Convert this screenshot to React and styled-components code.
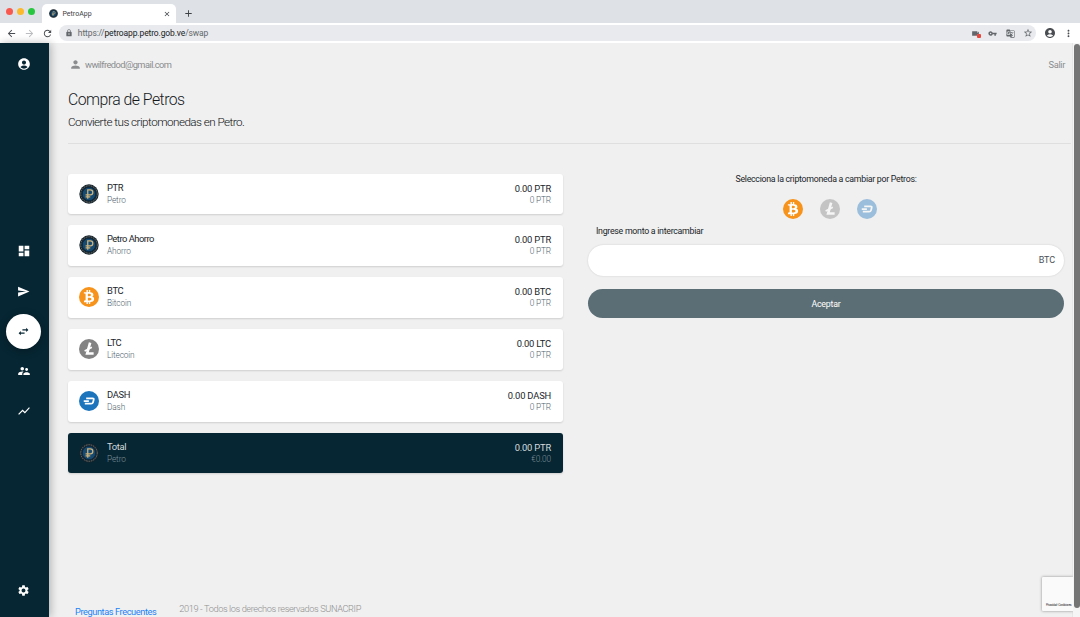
import styled, { createGlobalStyle } from "styled-components";
import {
  MdAccountCircle,
  MdArrowBack,
  MdArrowForward,
  MdClose,
  MdDashboard,
  MdGTranslate,
  MdLock,
  MdMoreVert,
  MdPerson,
  MdRefresh,
  MdSend,
  MdSettings,
  MdShowChart,
  MdStarBorder,
  MdSupervisorAccount,
  MdSwapHoriz,
  MdVideocam,
  MdVpnKey,
  MdAdd,
} from "react-icons/md";
import { FaBtc } from "react-icons/fa";

const GlobalStyle = createGlobalStyle`
  * {
    box-sizing: border-box;
  }
  body {
    margin: 0;
    background: #f0f0f0;
    font-family: Roboto, "Liberation Sans", sans-serif;
    overflow: hidden;
  }
  svg {
    display: block;
    flex-shrink: 0;
  }
`;

const Window = styled.div`
  width: 1080px;
  height: 617px;
  display: flex;
  flex-direction: column;
  overflow: hidden;
`;

const TabStrip = styled.div`
  height: 23px;
  flex-shrink: 0;
  display: flex;
  align-items: flex-end;
  background: #dee1e6;
`;
const Lights = styled.div`
  display: flex;
  gap: 4px;
  padding: 0 7px 8px 6px;
`;
const Light = styled.span`
  width: 7px;
  height: 7px;
  border-radius: 50%;
  background: ${(p) => p.$color};
`;
const Tab = styled.div`
  width: 134px;
  height: 19px;
  display: flex;
  align-items: center;
  padding: 0 5px 0 7px;
  border-radius: 5px 5px 0 0;
  background: #fff;
  color: #3c4043;
  font-size: 7px;
`;
const TabTitle = styled.span`
  flex: 1;
  padding-left: 4.5px;
`;
const NewTab = styled.div`
  padding: 0 0 4px 7px;
  color: #3c4043;
`;

const Toolbar = styled.div`
  height: 20px;
  flex-shrink: 0;
  display: flex;
  align-items: center;
  padding: 0 6px;
  background: #fff;
  color: #4a4d51;
`;
const NavButtons = styled.div`
  display: flex;
  gap: 7px;
  width: 53px;
`;
const Address = styled.div`
  width: 980px;
  height: 16px;
  display: flex;
  align-items: center;
  padding: 0 3px 0 6px;
  border-radius: 8px;
  background: #e8eaed;
  color: #63676b;
  font-size: 8.5px;
  letter-spacing: -0.12px;
`;
const Url = styled.span`
  flex: 1;
  padding-left: 5px;
  b {
    font-weight: 400;
    color: #202124;
  }
`;
const AddressIcons = styled.div`
  display: flex;
  align-items: center;
  gap: 8.5px;
`;
const Camera = styled.span`
  position: relative;
`;
const Blocked = styled.span`
  position: absolute;
  right: -1px;
  bottom: 0;
  width: 4px;
  height: 4px;
  border-radius: 1px;
  background: #e8453c;
`;
const BrowserMenu = styled.div`
  display: flex;
  align-items: center;
  gap: 7px;
  padding-left: 8px;
`;

const Body = styled.div`
  flex: 1;
  min-height: 0;
  display: flex;
`;

const Sidebar = styled.nav`
  width: 49px;
  flex-shrink: 0;
  display: flex;
  flex-direction: column;
  justify-content: space-between;
  align-items: center;
  padding: 14px 2px 20px 0;
  background: #062633;
  color: #fff;
  box-shadow: 2px 0 8px rgba(0, 0, 0, 0.25);
`;
const SideMenu = styled.div`
  display: flex;
  flex-direction: column;
  align-items: center;
  gap: 5px;
  margin-top: 7px;
`;
const SideItem = styled.div`
  width: 35px;
  height: 35px;
  display: flex;
  align-items: center;
  justify-content: center;
  border-radius: 50%;
  background: ${(p) => (p.$active ? "#fff" : "transparent")};
  color: ${(p) => (p.$active ? "#062633" : "#fff")};
  box-shadow: ${(p) => (p.$active ? "0 2px 8px rgba(0, 0, 0, 0.3)" : "none")};
`;

const Main = styled.main`
  flex: 1;
  min-width: 0;
  display: flex;
  flex-direction: column;
  padding-left: 19px;
  color: #212529;
`;
const UserBar = styled.div`
  height: 42px;
  display: flex;
  align-items: center;
  justify-content: space-between;
  padding: 0 7px 0 1px;
  color: #8a8c8e;
  font-size: 9.3px;
`;
const User = styled.div`
  display: flex;
  align-items: center;
  gap: 3px;
  letter-spacing: -0.56px;
`;
const Logout = styled.span`
  letter-spacing: -0.35px;
`;
const Heading = styled.header`
  height: 59px;
  margin-right: 1px;
  border-bottom: 1px solid #dfdfdf;
`;
const Title = styled.h1`
  margin: 5px 0 0;
  font-size: 15.8px;
  line-height: 20px;
  font-weight: 300;
  letter-spacing: -0.52px;
  color: #15191c;
`;
const Subtitle = styled.p`
  margin: 2px 0 0;
  font-size: 11.7px;
  line-height: 20px;
  font-weight: 300;
  letter-spacing: -0.54px;
  color: #0c0f12;
`;
const Columns = styled.div`
  display: flex;
  gap: 25px;
  padding-top: 30px;
`;

const Wallets = styled.section`
  width: 495px;
  display: flex;
  flex-direction: column;
  gap: 11px;
`;
const Card = styled.div`
  height: ${(p) => p.$height}px;
  display: flex;
  align-items: center;
  padding: 0 12px ${(p) => p.$height - 40}px 11px;
  border-radius: 3px;
  background: ${(p) => (p.$dark ? "#062633" : "#fff")};
  color: ${(p) => (p.$dark ? "#d5dbde" : "#212529")};
  box-shadow: 0 1px 2px rgba(0, 0, 0, 0.14);
`;
const CardText = styled.div`
  flex: 1;
  padding-left: 8px;
`;
const Amounts = styled.div`
  text-align: right;
`;
const Name = styled.div`
  font-size: 9.4px;
  line-height: 12px;
  letter-spacing: ${(p) => (p.$long ? -0.5 : -0.32)}px;
`;
const Amount = styled(Name)`
  letter-spacing: -0.2px;
`;
const Small = styled.div`
  font-size: 8.3px;
  line-height: ${(p) => (p.$tight ? 11 : 12)}px;
  font-weight: 300;
  letter-spacing: -0.13px;
  color: ${(p) => (p.$dark ? "#7f9099" : "#4f5f6d")};
`;

const Exchange = styled.section`
  width: 476px;
  display: flex;
  flex-direction: column;
`;
const Prompt = styled.div`
  height: 10px;
  line-height: 10px;
  text-align: center;
  font-size: 8.8px;
  letter-spacing: -0.28px;
`;
const Choices = styled.div`
  display: flex;
  justify-content: center;
  gap: 16px;
  padding: 15px 0 6px 8px;
`;
const Choice = styled.span`
  display: flex;
  width: 21px;
  justify-content: center;
  opacity: ${(p) => (p.$selected ? 1 : 0.4)};
`;
const Label = styled.label`
  padding-left: 8px;
  font-size: 8.8px;
  line-height: 12px;
  letter-spacing: -0.28px;
`;
const Field = styled.div`
  height: 31px;
  margin-top: 8px;
  display: flex;
  align-items: center;
  padding: 0 9px 1px 16px;
  border-radius: 16px;
  background: #fff;
  box-shadow: 0 0 2px rgba(0, 0, 0, 0.16);
  color: #495057;
  font-size: 9px;
  letter-spacing: -0.1px;
`;
const AmountInput = styled.input`
  flex: 1;
  border: 0;
  outline: 0;
  background: transparent;
`;
const Accept = styled.button`
  height: 29px;
  margin-top: 13px;
  padding: 0;
  border: 0;
  border-radius: 15px;
  background: #5c6e75;
  color: #fff;
  font-family: inherit;
  font-size: 8.8px;
  letter-spacing: -0.2px;
`;

const Footer = styled.footer`
  margin-top: auto;
  height: 16px;
  display: flex;
  gap: 23px;
  padding-left: 7px;
  font-size: 9.2px;
`;
const Faq = styled.a`
  padding-top: 5px;
  line-height: 12px;
  color: #1a82f7;
  letter-spacing: -0.4px;
`;
const Rights = styled.span`
  padding-top: 2px;
  line-height: 12px;
  font-weight: 300;
  color: #8f8f8f;
  letter-spacing: -0.38px;
`;

const ScrollTrack = styled.div`
  width: 8px;
  flex-shrink: 0;
  padding: 1px 1px 0 1px;
  background: #f5f5f5;
  border-left: 1px solid #e6e6e6;
`;
const ScrollThumb = styled.div`
  height: 564px;
  width: 6px;
  border-radius: 3px;
  background: #757575;
`;
const Captcha = styled.div`
  position: absolute;
  left: 1042px;
  top: 577px;
  width: 31px;
  height: 34px;
  padding: 26px 0 0 4px;
  white-space: nowrap;
  border-radius: 1px 0 0 1px;
  background: #fafafa;
  box-shadow: 0 0 3px #888;
  clip-path: inset(-4px 0 -4px -4px);
  color: #333;
  font-size: 3px;
  line-height: 4px;
  letter-spacing: -0.32px;
`;

function PetroIcon({ size = 20 }) {
  return (
    <svg width={size} height={size} viewBox="0 0 32 32">
      <circle cx="16" cy="16" r="15.5" fill="#17242c" />
      <circle
        cx="16"
        cy="16"
        r="13.2"
        fill="none"
        stroke="#6e736e"
        strokeWidth="1.6"
        strokeDasharray="2.4 1.4"
      />
      <circle cx="16" cy="16" r="10.8" fill="#174a70" stroke="#0c2a40" strokeWidth="1.6" />
      <path
        d="M14 23.5V9.5h4.2a3.9 3.9 0 0 1 0 7.8H10.5M10.5 20.5h7.5"
        fill="none"
        stroke="#d0b47a"
        strokeWidth="2"
      />
    </svg>
  );
}

const Disc = styled.span`
  width: 20px;
  height: 20px;
  flex-shrink: 0;
  display: flex;
  align-items: center;
  justify-content: center;
  border-radius: 50%;
  background: ${(p) => p.$color};
  color: #fff;
`;

function CoinIcon({ coin }) {
  if (coin === "btc") {
    return (
      <Disc $color="#f7931a">
        <FaBtc size={14} />
      </Disc>
    );
  }
  if (coin === "ltc") {
    return (
      <Disc $color="#838383">
        <svg
          width="20"
          height="20"
          viewBox="0 0 32 32"
          fill="none"
          stroke="currentColor"
        >
          <path d="M17.8 5.8L13 23.2H23.4" strokeWidth="4.2" />
          <path d="M9 19.2L20.6 13.2" strokeWidth="2.4" />
        </svg>
      </Disc>
    );
  }
  if (coin === "dash") {
    return (
      <Disc $color="#1c75bc">
        <svg
          width="20"
          height="20"
          viewBox="0 0 32 32"
          fill="none"
          stroke="currentColor"
          strokeWidth="2.8"
          strokeLinejoin="round"
        >
          <path d="M11.5 11.6h10.2q2.4 0 1.8 2.3l-1 4q-.6 2.4-3.2 2.4H9.3M7.6 16h8.2" />
        </svg>
      </Disc>
    );
  }
  return <PetroIcon />;
}

const wallets = [
  { coin: "ptr", name: "PTR", sub: "Petro", amount: "0.00 PTR", value: "0 PTR", height: 40 },
  { coin: "ptr", name: "Petro Ahorro", sub: "Ahorro", amount: "0.00 PTR", value: "0 PTR", height: 41 },
  { coin: "btc", name: "BTC", sub: "Bitcoin", amount: "0.00 BTC", value: "0 PTR", height: 41 },
  { coin: "ltc", name: "LTC", sub: "Litecoin", amount: "0.00 LTC", value: "0 PTR", height: 41 },
  { coin: "dash", name: "DASH", sub: "Dash", amount: "0.00 DASH", value: "0 PTR", height: 41 },
  { coin: "ptr", name: "Total", sub: "Petro", amount: "0.00 PTR", value: "€0.00", height: 40, dark: true },
];

function Browser() {
  return (
    <>
      <TabStrip>
        <Lights>
          <Light $color="#f9584f" />
          <Light $color="#fcb92c" />
          <Light $color="#27c73f" />
        </Lights>
        <Tab>
          <PetroIcon size={9} />
          <TabTitle>PetroApp</TabTitle>
          <MdClose size={8} />
        </Tab>
        <NewTab>
          <MdAdd size={11} />
        </NewTab>
      </TabStrip>
      <Toolbar>
        <NavButtons>
          <MdArrowBack size={11} />
          <MdArrowForward size={11} color="#b9bbbe" />
          <MdRefresh size={11} />
        </NavButtons>
        <Address>
          <MdLock size={8} />
          <Url>
            https://<b>petroapp.petro.gob.ve</b>/swap
          </Url>
          <AddressIcons>
            <Camera>
              <MdVideocam size={9} />
              <Blocked />
            </Camera>
            <MdVpnKey size={9} />
            <MdGTranslate size={9} />
            <MdStarBorder size={10} />
          </AddressIcons>
        </Address>
        <BrowserMenu>
          <MdAccountCircle size={12} />
          <MdMoreVert size={11} />
        </BrowserMenu>
      </Toolbar>
    </>
  );
}

function App() {
  return (
    <Window>
      <GlobalStyle />
      <Browser />
      <Body>
        <Sidebar>
          <MdAccountCircle size={14} />
          <SideMenu>
            <SideItem>
              <MdDashboard size={14} />
            </SideItem>
            <SideItem>
              <MdSend size={13} />
            </SideItem>
            <SideItem $active>
              <MdSwapHoriz size={13} />
            </SideItem>
            <SideItem>
              <MdSupervisorAccount size={14} />
            </SideItem>
            <SideItem>
              <MdShowChart size={14} />
            </SideItem>
          </SideMenu>
          <MdSettings size={13} />
        </Sidebar>
        <Main>
          <UserBar>
            <User>
              <MdPerson size={13} />
              wwilfredod@gmail.com
            </User>
            <Logout>Salir</Logout>
          </UserBar>
          <Heading>
            <Title>Compra de Petros</Title>
            <Subtitle>Convierte tus criptomonedas en Petro.</Subtitle>
          </Heading>
          <Columns>
            <Wallets>
              {wallets.map((w) => (
                <Card key={w.name} $height={w.height} $dark={w.dark}>
                  <CoinIcon coin={w.coin} />
                  <CardText>
                    <Name $long={w.name.length > 6}>{w.name}</Name>
                    <Small $dark={w.dark}>{w.sub}</Small>
                  </CardText>
                  <Amounts>
                    <Amount>{w.amount}</Amount>
                    <Small $tight $dark={w.dark}>
                      {w.value}
                    </Small>
                  </Amounts>
                </Card>
              ))}
            </Wallets>
            <Exchange>
              <Prompt>Selecciona la criptomoneda a cambiar por Petros:</Prompt>
              <Choices>
                <Choice $selected>
                  <CoinIcon coin="btc" />
                </Choice>
                <Choice>
                  <CoinIcon coin="ltc" />
                </Choice>
                <Choice>
                  <CoinIcon coin="dash" />
                </Choice>
              </Choices>
              <Label htmlFor="amount">Ingrese monto a intercambiar</Label>
              <Field>
                <AmountInput id="amount" />
                BTC
              </Field>
              <Accept>Aceptar</Accept>
            </Exchange>
          </Columns>
          <Footer>
            <Faq>Preguntas Frecuentes</Faq>
            <Rights>2019 - Todos los derechos reservados SUNACRIP</Rights>
          </Footer>
        </Main>
        <ScrollTrack>
          <ScrollThumb />
        </ScrollTrack>
      </Body>
      <Captcha>Privacidad - Condiciones</Captcha>
    </Window>
  );
}

export default App;
